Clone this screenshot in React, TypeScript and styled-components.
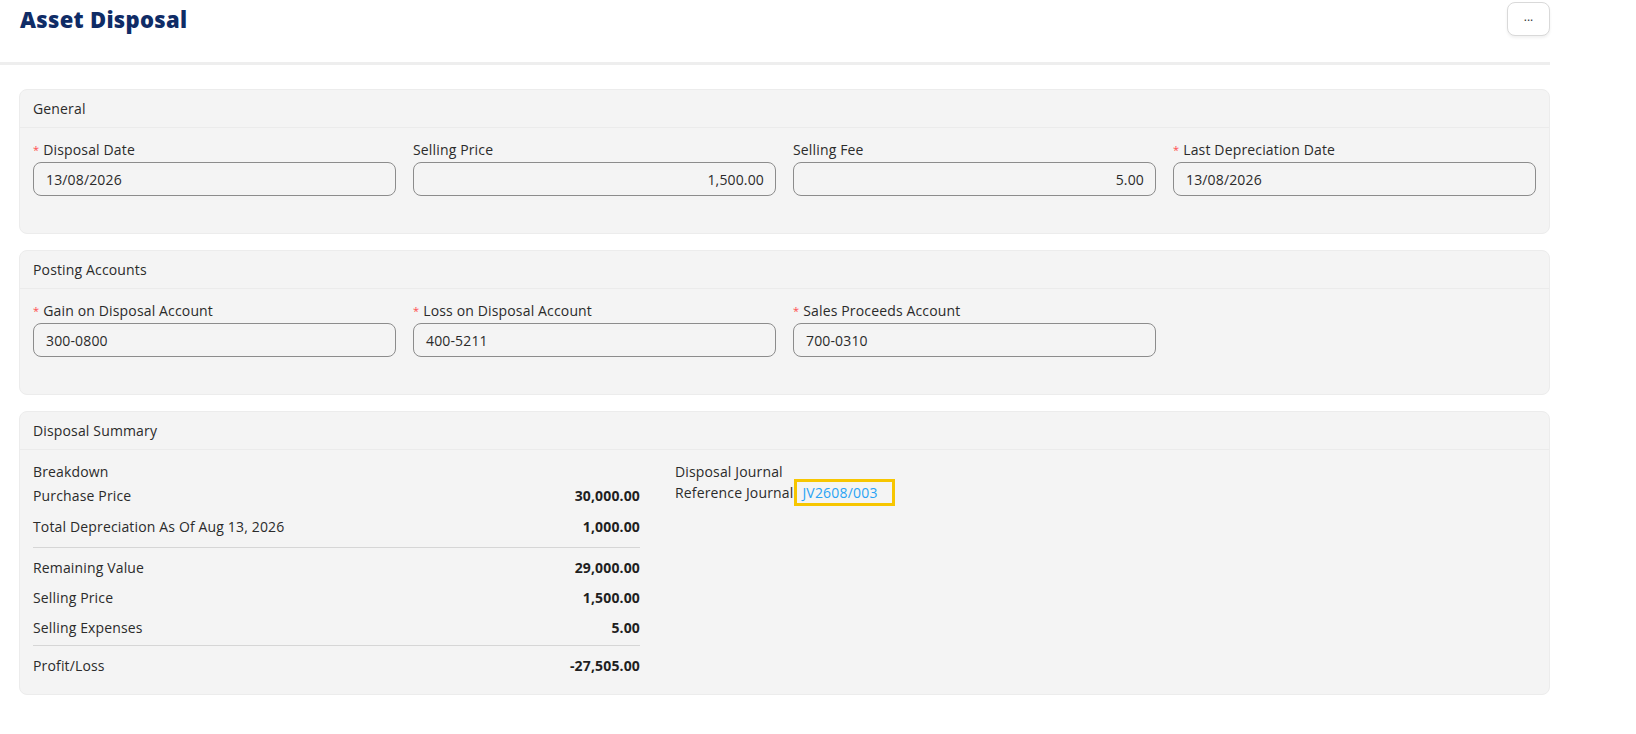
import React from "react";
import styled, { createGlobalStyle } from "styled-components";

const Global = createGlobalStyle`
  html, body { margin: 0; padding: 0; background: #ffffff; }
  body { font-family: "Open Sans", "Noto Sans", sans-serif; color: #2b2b2b; }
  * { box-sizing: border-box; }
`;

const Page = styled.div`
  width: 1636px;
  min-height: 734px;
  padding-right: 86px;
`;

const Header = styled.header`
  height: 65px;
  display: flex;
  justify-content: space-between;
  align-items: flex-start;
  padding: 0 0 0 20px;
  border-bottom: 3px solid #eeeeee;
`;

const Title = styled.h1`
  margin: 4px 0 0;
  font-family: "Open Sans", sans-serif;
  font-size: 22px;
  font-weight: 800;
  color: #0f2c66;
  letter-spacing: 0.3px;
`;

const MoreButton = styled.button`
  margin-top: 2px;
  width: 43px;
  height: 34px;
  border: 1px solid #d9d9d9;
  border-radius: 8px;
  background: #fff;
  box-shadow: 0 2px 3px rgba(0, 0, 0, 0.06);
  font-size: 12px;
  color: #333;
  padding: 0 0 6px;
  font-family: inherit;
`;

const Body = styled.main`
  padding: 24px 0 0 19px;
  display: flex;
  flex-direction: column;
  gap: 16px;
`;

const Card = styled.section`
  background: #f4f4f4;
  border: 1px solid #ececec;
  border-radius: 8px;
`;

const CardHeader = styled.div`
  height: 38px;
  display: flex;
  align-items: center;
  padding-left: 13px;
  font-size: 14px;
  letter-spacing: 0.15px;
  color: #2b2b2b;
  border-bottom: 1px solid #ebebeb;
`;

const FieldGrid = styled.div`
  display: grid;
  grid-template-columns: repeat(4, 363px);
  column-gap: 17px;
  padding: 12px 13px 37px;
`;

const Field = styled.div`
  display: flex;
  flex-direction: column;
`;

const Label = styled.label`
  font-size: 14px;
  letter-spacing: 0.15px;
  height: 22px;
  line-height: 20px;
  color: #2b2b2b;
`;

const Star = styled.span`
  color: #ff4d4f;
  font-size: 11px;
  margin-right: 4px;
  vertical-align: 1px;
`;

const Input = styled.div<{ $right?: boolean }>`
  height: 34px;
  border: 1px solid #8c8c8c;
  border-radius: 8px;
  display: flex;
  align-items: center;
  justify-content: ${(p) => (p.$right ? "flex-end" : "flex-start")};
  padding: 0 11px 0 12px;
  font-size: 14px;
  letter-spacing: 0.15px;
  color: #2b2b2b;
`;

const Summary = styled.div`
  display: grid;
  grid-template-columns: 607px 1fr;
  column-gap: 35px;
  padding: 11px 13px 14px;
`;

const Column = styled.div`
  display: flex;
  flex-direction: column;
`;

const Row = styled.div<{ $h?: number }>`
  display: flex;
  justify-content: space-between;
  align-items: center;
  height: ${(p) => p.$h ?? 30}px;
  font-size: 14px;
  letter-spacing: 0.15px;
  color: #2b2b2b;
`;

const Plain = styled.div`
  height: 21px;
  display: flex;
  align-items: center;
  font-size: 14px;
  letter-spacing: 0.15px;
  color: #2b2b2b;
`;

const Value = styled.span`
  font-weight: 700;
  color: #1f1f1f;
`;

const Divider = styled.hr`
  margin: 3px 0 4px;
  border: none;
  border-top: 1px solid #d6d6d6;
`;

const LinkBox = styled.a`
  display: inline-flex;
  align-items: center;
  margin-left: 1px;
  height: 27px;
  padding: 0 14px 0 5px;
  border: 3px solid #f7c600;
  color: #2aa3f5;
  text-decoration: none;
  font-size: 14px;
  letter-spacing: 0.2px;
`;

const fields1 = [
  { label: "Disposal Date", value: "13/08/2026", req: true },
  { label: "Selling Price", value: "1,500.00", right: true },
  { label: "Selling Fee", value: "5.00", right: true },
  { label: "Last Depreciation Date", value: "13/08/2026", req: true },
];

const fields2 = [
  { label: "Gain on Disposal Account", value: "300-0800", req: true },
  { label: "Loss on Disposal Account", value: "400-5211", req: true },
  { label: "Sales Proceeds Account", value: "700-0310", req: true },
];

type F = { label: string; value: string; req?: boolean; right?: boolean };

const FieldItem = ({ f }: { f: F }) => (
  <Field>
    <Label>
      {f.req && <Star>*</Star>}
      {f.label}
    </Label>
    <Input $right={f.right}>{f.value}</Input>
  </Field>
);

export default function App() {
  return (
    <>
      <Global />
      <Page>
        <Header>
          <Title>Asset Disposal</Title>
          <MoreButton>...</MoreButton>
        </Header>
        <Body>
          <Card>
            <CardHeader>General</CardHeader>
            <FieldGrid>
              {fields1.map((f) => (
                <FieldItem key={f.label} f={f} />
              ))}
            </FieldGrid>
          </Card>
          <Card>
            <CardHeader>Posting Accounts</CardHeader>
            <FieldGrid>
              {fields2.map((f) => (
                <FieldItem key={f.label} f={f} />
              ))}
            </FieldGrid>
          </Card>
          <Card>
            <CardHeader>Disposal Summary</CardHeader>
            <Summary>
              <Column>
                <Plain>Breakdown</Plain>
                <Row $h={27}>
                  <span>Purchase Price</span>
                  <Value>30,000.00</Value>
                </Row>
                <Row $h={35}>
                  <span>Total Depreciation As Of Aug 13, 2026</span>
                  <Value>1,000.00</Value>
                </Row>
                <Divider />
                <Row>
                  <span>Remaining Value</span>
                  <Value>29,000.00</Value>
                </Row>
                <Row>
                  <span>Selling Price</span>
                  <Value>1,500.00</Value>
                </Row>
                <Row>
                  <span>Selling Expenses</span>
                  <Value>5.00</Value>
                </Row>
                <Divider />
                <Row>
                  <span>Profit/Loss</span>
                  <Value>-27,505.00</Value>
                </Row>
              </Column>
              <Column>
                <Plain>Disposal Journal</Plain>
                <Plain>
                  Reference Journal
                  <LinkBox href="#">JV2608/003</LinkBox>
                </Plain>
              </Column>
            </Summary>
          </Card>
        </Body>
      </Page>
    </>
  );
}
